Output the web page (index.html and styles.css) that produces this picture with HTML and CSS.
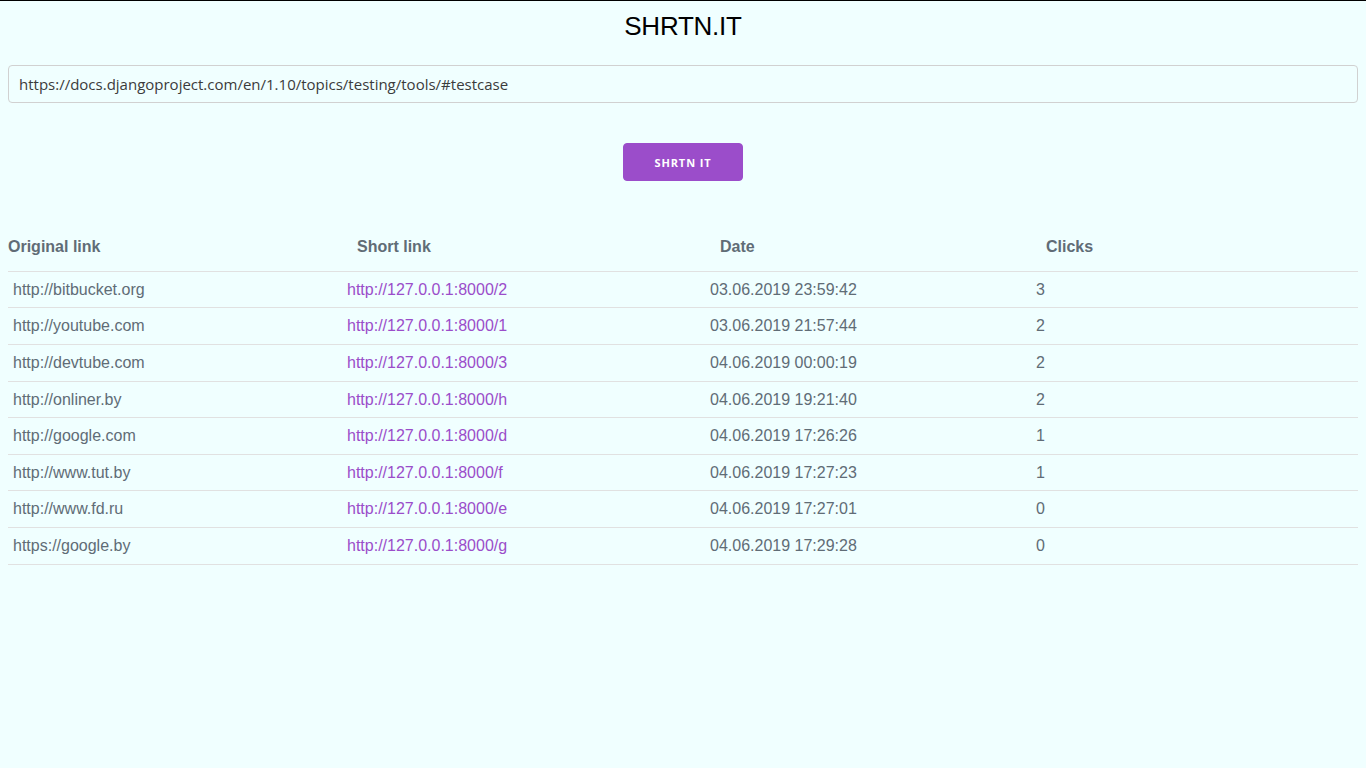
FILE: index.html
```html
<!DOCTYPE html>
<html lang="en">
<head>
<meta charset="utf-8">
<title>SHRTN.IT</title>
<link rel="stylesheet" href="styles.css">
</head>
<body>
<div class="page">
  <h1 class="title">SHRTN.IT</h1>
  <form class="shorten-form">
    <input class="url-input" type="text" value="https://docs.djangoproject.com/en/1.10/topics/testing/tools/#testcase">
    <div class="actions">
      <button class="btn" type="button">Shrtn it</button>
    </div>
  </form>
  <table class="links">
    <colgroup>
      <col class="c1"><col class="c2"><col class="c3"><col class="c4">
    </colgroup>
    <thead>
      <tr><th>Original link</th><th>Short link</th><th>Date</th><th>Clicks</th></tr>
    </thead>
    <tbody>
      <tr><td>http://bitbucket.org</td><td><a href="#">http://127.0.0.1:8000/2</a></td><td>03.06.2019 23:59:42</td><td>3</td></tr>
      <tr><td>http://youtube.com</td><td><a href="#">http://127.0.0.1:8000/1</a></td><td>03.06.2019 21:57:44</td><td>2</td></tr>
      <tr><td>http://devtube.com</td><td><a href="#">http://127.0.0.1:8000/3</a></td><td>04.06.2019 00:00:19</td><td>2</td></tr>
      <tr><td>http://onliner.by</td><td><a href="#">http://127.0.0.1:8000/h</a></td><td>04.06.2019 19:21:40</td><td>2</td></tr>
      <tr><td>http://google.com</td><td><a href="#">http://127.0.0.1:8000/d</a></td><td>04.06.2019 17:26:26</td><td>1</td></tr>
      <tr><td>http://www.tut.by</td><td><a href="#">http://127.0.0.1:8000/f</a></td><td>04.06.2019 17:27:23</td><td>1</td></tr>
      <tr><td>http://www.fd.ru</td><td><a href="#">http://127.0.0.1:8000/e</a></td><td>04.06.2019 17:27:01</td><td>0</td></tr>
      <tr><td>https://google.by</td><td><a href="#">http://127.0.0.1:8000/g</a></td><td>04.06.2019 17:29:28</td><td>0</td></tr>
    </tbody>
  </table>
</div>
</body>
</html>
```
FILE: styles.css
```css
html, body {
  margin: 0;
  padding: 0;
}
body {
  background: #f0ffff;
  border-top: 1px solid #000;
  font-family: "Liberation Sans", Arial, sans-serif;
  color: #606c76;
  min-height: 767px;
}
.page {
  padding: 0 8px;
}
.title {
  margin: 10px 0 0;
  font-size: 26px;
  line-height: 30px;
  font-weight: 400;
  letter-spacing: -0.25px;
  text-align: center;
  color: #000;
}
.shorten-form {
  margin: 24px 0 0;
}
.url-input {
  display: block;
  box-sizing: border-box;
  width: 100%;
  height: 38px;
  margin: 0;
  padding: 6px 10px;
  border: 1px solid #d1d1d1;
  border-radius: 4px;
  background: transparent;
  font-family: "Open Sans", "Noto Sans", sans-serif;
  font-size: 15px;
  color: #3b3b3b;
  outline: none;
}
.actions {
  display: flex;
  justify-content: center;
  padding-top: 40px;
}
.btn {
  height: 38px;
  padding: 0 30px;
  border: 1px solid #9b4dca;
  border-radius: 4px;
  background: #9b4dca;
  color: #fff;
  font-family: "Open Sans", "Noto Sans", sans-serif;
  font-size: 11px;
  font-weight: 700;
  letter-spacing: 0.9px;
  text-transform: uppercase;
  cursor: pointer;
}
.links {
  width: 100%;
  margin-top: 40px;
  border-collapse: collapse;
  border-spacing: 0;
  table-layout: fixed;
  font-size: 16px;
  line-height: 25.625px;
}
.c1 { width: 334px; }
.c2 { width: 363px; }
.c3 { width: 326px; }
.c4 { width: 327px; }
.links th {
  padding: 13px 15px 11px;
  border-bottom: 1px solid #e1e1e1;
  text-align: left;
  font-weight: 700;
}
.links th:first-child {
  padding-left: 0;
}
.links td {
  padding: 5px;
  border-bottom: 1px solid #e1e1e1;
  text-align: left;
}
.links a {
  color: #9b4dca;
  text-decoration: none;
}
```
